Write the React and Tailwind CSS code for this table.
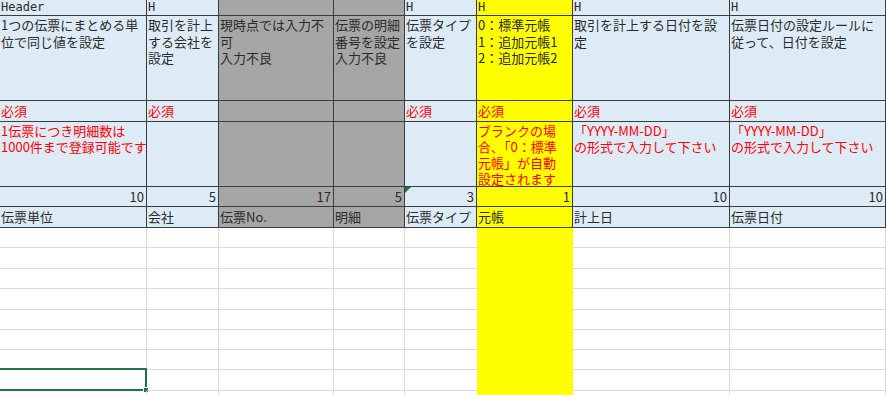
import React from 'react'

// 列ごとの背景色（ヘッダー部分）
const BLUE = 'bg-[#ddebf7]'
const GRAY = 'bg-[#a6a6a6]'
const YELLOW = 'bg-[#ffff00]'
const colBg = [BLUE, BLUE, GRAY, GRAY, BLUE, YELLOW, BLUE, BLUE]

const gridCols = 'grid grid-cols-[147px_72px_115px_71px_72px_96px_157px_156px]'

// ヘッダー定義の各行
const rowHeader = ['Header', 'H', '', '', 'H', 'H', 'H', 'H']
const rowDesc = [
    '1つの伝票にまとめる単\n位で同じ値を設定',
    '取引を計上\nする会社を\n設定',
    '現時点では入力不\n可\n入力不良',
    '伝票の明細\n番号を設定\n入力不良',
    '伝票タイプ\nを設定',
    '0：標準元帳\n1：追加元帳1\n2：追加元帳2',
    '取引を計上する日付を設\n定',
    '伝票日付の設定ルールに\n従って、日付を設定',
]
const rowRequired = ['必須', '必須', '', '', '必須', '必須', '必須', '必須']
const rowNote = [
    '1伝票につき明細数は\n1000件まで登録可能です',
    '',
    '',
    '',
    '',
    'ブランクの場\n合、「0：標準\n元帳」が自動\n設定されます',
    '「YYYY-MM-DD」\nの形式で入力して下さい',
    '「YYYY-MM-DD」\nの形式で入力して下さい',
]
const rowLength = ['10', '5', '17', '5', '3', '1', '10', '10']
const rowName = ['伝票単位', '会社', '伝票No.', '明細', '伝票タイプ', '元帳', '計上日', '伝票日付']

// 空行の高さ
const emptyRows = ['h-[20px]', 'h-[21px]', 'h-[20px]', 'h-[21px]', 'h-[20px]', 'h-[20px]', 'h-[20px]', 'h-[21px]', 'h-[21px]']

const Cell = ({ bg, className = '', children }) => (
    <div className={`${bg} border-r border-b border-[#3c3c3c] overflow-hidden whitespace-pre px-[1px] ${className}`}>
        {children}
    </div>
)

const App = () => {
    return (
        <div className="w-[886px] h-[395px] overflow-hidden bg-white text-[#2b2b2b] font-['Noto_Sans_CJK_JP','Liberation_Sans',sans-serif]">

            {/* 1行目 Header */}
            <div className={`${gridCols} h-[16px]`}>
                {rowHeader.map((t, i) => (
                    <Cell key={i} bg={colBg[i]} className="text-[12px] leading-[15px] font-['DejaVu_Sans_Mono',monospace]">{t}</Cell>
                ))}
            </div>

            {/* 説明 */}
            <div className={`${gridCols} h-[85px]`}>
                {rowDesc.map((t, i) => (
                    <Cell key={i} bg={colBg[i]} className="text-[13px] leading-[16.5px] pt-[1px]">{t}</Cell>
                ))}
            </div>

            {/* 必須 */}
            <div className={`${gridCols} h-[21px]`}>
                {rowRequired.map((t, i) => (
                    <Cell key={i} bg={colBg[i]} className="text-[13px] leading-[20px] text-[#ff0000]">{t}</Cell>
                ))}
            </div>

            {/* 注意書き */}
            <div className={`${gridCols} h-[65px]`}>
                {rowNote.map((t, i) => (
                    <Cell key={i} bg={colBg[i]} className="text-[13px] leading-[16px] text-[#ff0000] pt-[1px]">{t}</Cell>
                ))}
            </div>

            {/* 桁数 */}
            <div className={`${gridCols} h-[20px]`}>
                {rowLength.map((t, i) => (
                    <Cell key={i} bg={colBg[i]} className="relative text-[13px] leading-[19px] text-right pr-[2px]">
                        {i === 4 && (
                            <span className="absolute left-0 top-0 w-0 h-0 border-t-[6px] border-r-[6px] border-t-[#1e7145] border-r-transparent" />
                        )}
                        {t}
                    </Cell>
                ))}
            </div>

            {/* 項目名 */}
            <div className={`${gridCols} h-[21px]`}>
                {rowName.map((t, i) => (
                    <Cell key={i} bg={colBg[i]} className="text-[13px] leading-[20px]">{t}</Cell>
                ))}
            </div>

            {/* データ入力エリア */}
            {emptyRows.map((h, r) => (
                <div key={r} className={`${gridCols} ${h}`}>
                    {colBg.map((_, i) => {
                        if (i === 5) return <div key={i} className="bg-[#ffff00]" />
                        const noRight = i === 4 ? '' : 'border-r'
                        return (
                            <div key={i} className={`relative border-b ${noRight} border-[#dadada]`}>
                                {r === 7 && i === 0 && (
                                    <div className="absolute -left-[2px] -top-[2px] -right-[1px] -bottom-[1px] border-2 border-[#217346]">
                                        <span className="absolute -right-[4px] -bottom-[4px] w-[6px] h-[6px] bg-[#217346] border border-white" />
                                    </div>
                                )}
                            </div>
                        )
                    })}
                </div>
            ))}
        </div>
    )
}

export default App
